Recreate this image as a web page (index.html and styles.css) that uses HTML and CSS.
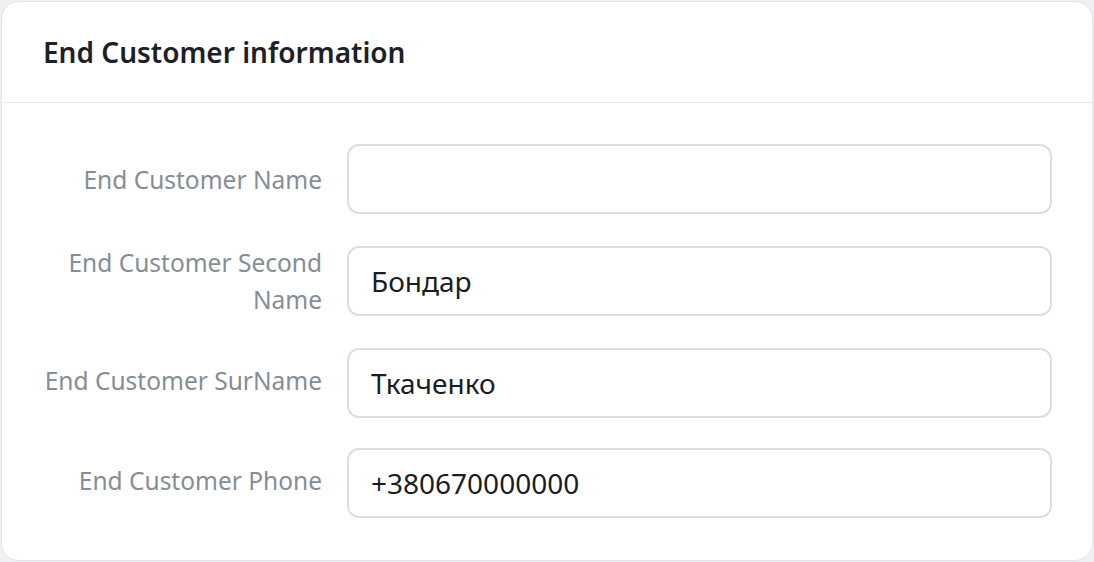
FILE: index.html
```html
<!DOCTYPE html>
<html lang="en">
<head>
<meta charset="utf-8">
<title>End Customer information</title>
<link rel="stylesheet" href="styles.css">
</head>
<body>
<section class="card">
  <header class="card-header">
    <h2 class="card-title">End Customer information</h2>
  </header>
  <div class="card-body">
    <div class="form-row">
      <label class="form-label" for="f-name">End Customer Name</label>
      <input class="form-input" id="f-name" type="text" value="">
    </div>
    <div class="form-row">
      <label class="form-label" for="f-second">End Customer Second Name</label>
      <input class="form-input" id="f-second" type="text" value="Бондар">
    </div>
    <div class="form-row">
      <label class="form-label label-raised" for="f-sur">End Customer SurName</label>
      <input class="form-input" id="f-sur" type="text" value="Ткаченко">
    </div>
    <div class="form-row form-row-last">
      <label class="form-label label-raised" for="f-phone">End Customer Phone</label>
      <input class="form-input" id="f-phone" type="text" value="+380670000000">
    </div>
  </div>
</section>
</body>
</html>
```

FILE: styles.css
```css
* { box-sizing: border-box; }
html, body { margin: 0; padding: 0; }
body {
  background: #eef0f3;
  font-family: "Noto Sans", "Open Sans", sans-serif;
  padding: 1px;
  width: 1094px;
  height: 562px;
}
.card {
  background: #ffffff;
  border: 1px solid #e2e5e9;
  border-radius: 18px;
  height: 560px;
  display: flex;
  flex-direction: column;
}
.card-header {
  height: 101px;
  border-bottom: 1px solid #e6e8eb;
  display: flex;
  align-items: center;
  padding: 0 41px;
}
.card-title {
  margin: 0;
  font-size: 28px;
  font-weight: 600;
  color: #1c2127;
}
.card-body {
  padding: 41px 41px 0 41px;
  display: flex;
  flex-direction: column;
  gap: 32px;
}
.form-row {
  display: flex;
  align-items: center;
  gap: 25px;
  height: 70px;
}
.form-row-last {
  margin-top: -2px;
}
.form-label {
  flex: 0 0 279px;
  text-align: right;
  font-size: 24.5px;
  line-height: 37px;
  color: #858d97;
}
.label-raised {
  padding-bottom: 5px;
}
.form-input {
  flex: 0 0 705px;
  height: 70px;
  border: 2px solid #dadee3;
  border-radius: 12px;
  padding: 0 22px;
  font-family: inherit;
  font-size: 28px;
  color: #1a1e23;
  background: #fff;
  outline: none;
}
```
